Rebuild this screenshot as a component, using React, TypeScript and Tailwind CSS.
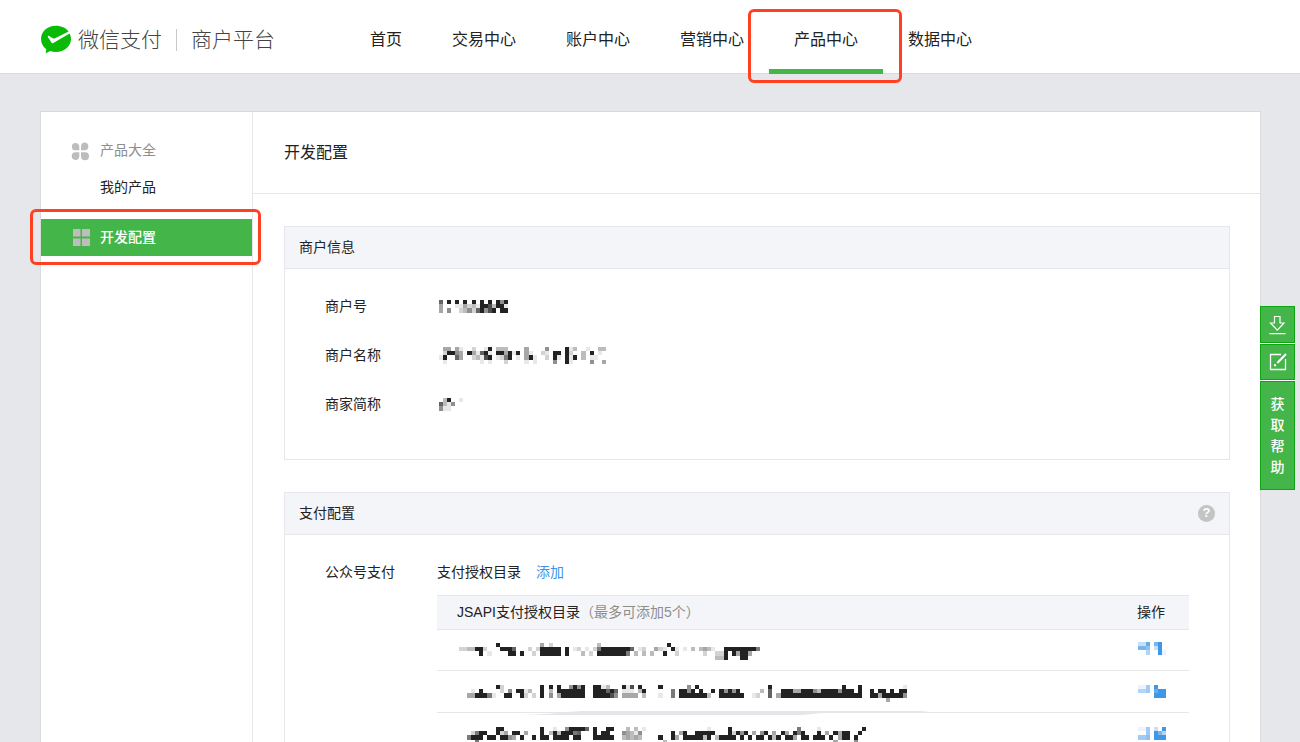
import React from 'react';

const CELL = 4.07;

/* Each row is a list of runs, "startColumn:levels", where a level is 0 (clear) to 9 (solid). */
function Mosaic({ rows, cols, color = '#222222', label }: { rows: string[]; cols: number; color?: string; label: string }) {
  const w = Math.round(cols * CELL);
  const h = Math.round(rows.length * 4.2);
  return (
    <svg width={w} height={h} viewBox={`0 0 ${w} ${h}`} role="img" aria-label={label} shapeRendering="crispEdges" className="block">
      {rows.map((row, y) =>
        row.split(' ').filter(Boolean).flatMap((run) => {
          const [start, levels] = run.split(':');
          return levels.split('').map((n, i) => {
            if (n === '0') return null;
            const left = Math.round((Number(start) + i) * CELL);
            const right = Math.round((Number(start) + i + 1) * CELL);
            const top = Math.round(y * 4.2);
            const bottom = Math.round((y + 1) * 4.2);
            return (
              <rect
                key={`${y}-${start}-${i}`}
                x={left}
                y={top}
                width={right - left}
                height={bottom - top}
                fill={color}
                fillOpacity={n === '9' ? 1 : Number(n) / 10}
              />
            );
          });
        }),
      )}
    </svg>
  );
}

const merchantInfo = [
  {
    label: '商户号',
    cols: 17,
    rows: ['0:70909090909090959', '0:40001142319983991', '0:40500235279589099'],
  },
  {
    label: '商户名称',
    cols: 41,
    rows: [
      '1:44041 8:2 11:19 14:333 21:4 26:5 31:913 36:1 39:33',
      '1:299540941791 14:994919 21:41 25:21 28:99 31:92 35:309 39:1',
      '0:19007400231890126901 21:491 26:2 28:91 31:919 35:3011',
      '1:1 10:101 16:2 21:101 28:5 31:91 37:5 40:4',
    ],
  },
  { label: '商家简称', cols: 6, rows: ['1:39 5:1', '0:7315', '0:511'] },
];

const directories = [
  {
    top: 'pt-[13px]',
    opTop: 'pt-[12px]',
    height: 'h-[41px]',
    cols: 74,
    rows: [
      '9:9 20:402 34:3 51:9',
      '0:2233992 10:9997 17:202 20:99999 26:9 28:12 31:1 33:2699999997 44:12 48:421 52:91 55:103 59:3431 65:999999996',
      '5:901 12:9909 18:2 20:99999 26:9 30:302 34:9999999603 45:303 50:9 53:2 60:2 63:2290949940',
      '63:3390009 9:0 70:9',
    ],
    op: ['0:338079', '0:776039', '2:400910'],
  },
  {
    top: 'pt-[14px]',
    opTop: 'pt-[14px]',
    height: 'h-[42px]',
    cols: 111,
    rows: [
      '9:92 20:909 24:9 27:5959 33:9913 40:91809 49:9 56:509 76:9 94:9 98:9 109:1',
      '3:109 10:205 14:9913 20:903 24:9999999 33:999797 40:111039 52:609959090 62:9 64:95959 74:307 79:99944999539999599909 101:909909099',
      '2:449996 8:1 11:99 15:92 18:202 20:9 22:5 24:4999999 33:999985 40:44440 45:3 49:1 52:6099999993 64:999999 72:12007 78:499999999999999999999 101:994999995',
      '105:4',
    ],
    op: ['0:11509', '0:4450899', '4:999'],
  },
  {
    top: 'pt-[14px]',
    opTop: 'pt-[14px]',
    height: 'h-[42px]',
    cols: 101,
    rows: [
      '9:99 20:9001 26:599997 33:9009 37:9 41:303 45:1 61:1 66:9 83:6 88:1 99:9',
      '3:2699 9:92409904 20:9039 24:399967 33:9099 40:54315 52:9049009 59:9999 66:92959 72:4059 77:40940969 88:904 92:9499 98:9',
      '2:699909 8:90995409 17:09 20:9909 24:9990990 33:99999 40:34343 49:90 52:9409999939 63:3999909 71:90990939099409909 88:99 91:9049909',
      '4:6 50:3 92:4 97:5',
    ],
    op: ['0:1150309', '2:50974', '0:5560999'],
  },
];

const navItems = ['首页', '交易中心', '账户中心', '营销中心', '产品中心', '数据中心'];

function Highlight({ className }: { className: string }) {
  return <span aria-hidden="true" className={`pointer-events-none absolute z-10 rounded-md border-3 border-[#ff4122] ${className}`} />;
}

function Header() {
  return (
    <header className="flex h-[74px] shrink-0 items-stretch border-b border-[#d9dadc] bg-white">
      <a href="#home" className="ml-10 flex w-[305px] items-center pt-[7px] text-[21px] font-light text-[#444]">
        <svg width="32" height="30" viewBox="0 0 32 30" aria-hidden="true">
          <path
            d="M16 .8C7.500.8 1 6.600 1 14c0 4.200 2.100 7.900 5.300 10.300L5.700 28.500l4.400-2.500c1.900.7 3.800 1 5.900 1 8.400 0 15-5.800 15-13 0-2-.5-4-1.400-5.600L13.300 18.100c-.8.400-1.500.2-1.900-.6L7.900 11.900c-.3-.8.400-1.300 1.100-.9l3.800 2.300c.6.400 1.100.4 1.800.1L28.600 6.500C25.900 3 21.300.8 16 .8z"
            fill="#09bb07"
          />
        </svg>
        <span className="ml-[6px]">微信支付</span>
        <span className="mx-[14px] h-[22px] w-px bg-[#c8c8c8]" />
        <span>商户平台</span>
      </a>
      <nav className="flex text-base text-[#222]">
        {navItems.map((item) => (
          <a key={item} href="#nav" className="relative flex items-center px-[25px] pt-[7px]">
            <span className="whitespace-nowrap">{item}</span>
            {item === '产品中心' && (
              <>
                <span className="absolute inset-x-0 -bottom-px h-[5px] bg-[#44b549]" />
                <Highlight className="top-[9px] -right-[19px] -bottom-[10px] -left-[21px]" />
              </>
            )}
          </a>
        ))}
      </nav>
    </header>
  );
}

function Sidebar() {
  return (
    <aside className="w-[212px] shrink-0 border-r border-[#e7e7eb] pt-[21px]">
      <div className="flex h-9 items-center pl-[30px] text-[#8d8d8d]">
        <svg width="19" height="19" viewBox="0 0 19 19" aria-hidden="true" fill="#bdbdbd" className="mr-[10px]">
          <path d="M4.500 1A3.600 3.600 0 0 1 8.300 4.700V8.300H4.500A3.650 3.650 0 0 1 4.500 1z" />
          <path d="M14.200.5a4 4 0 0 1 0 7.800H10V4.500A4.100 4.100 0 0 1 14.200.5z" />
          <path d="M4.500 10.300H8.300V14.500A3.800 3.800 0 1 1 4.500 10.300z" />
          <path d="M10 10.300h4.100A4 4 0 1 1 10 14.500z" />
        </svg>
        <span className="pb-0.5">产品大全</span>
      </div>
      <a href="#mine" className="flex h-9 items-center pl-[59px] text-[#222]">我的产品</a>
      <div className="relative mt-[14px]">
        <a href="#dev" className="flex h-[37px] items-center bg-[#44b549] pl-[32px] font-medium text-white">
          <svg width="17" height="17" viewBox="0 0 17 17" aria-hidden="true" fill="#bdbdbd" className="mr-[10px]">
            <path d="M0 0h7.500v7.500H0zM9 0h8v7.500H9zM0 9.500h7.500V17H0zM9 9.500h8V17H9z" />
          </svg>
          <span className="pb-0.5">开发配置</span>
        </a>
        <Highlight className="-top-[10px] -right-[9px] -bottom-[9px] -left-[11px]" />
      </div>
    </aside>
  );
}

function Panel({ title, help, children }: { title: string; help?: boolean; children: React.ReactNode }) {
  return (
    <section className="border border-[#e7e7eb]">
      <div className="flex h-[42px] items-center justify-between border-b border-[#e7e7eb] bg-[#f4f5f9] px-[14px]">
        <h2 className="pb-0.5">{title}</h2>
        {help && (
          <button type="button" aria-label="帮助" className="flex size-[17px] items-center justify-center rounded-full bg-[#c4c4c4] text-[13px] font-bold text-white">
            ?
          </button>
        )}
      </div>
      {children}
    </section>
  );
}

function FloatingTools() {
  const box = 'flex w-[35px] items-center justify-center border border-[#0ea512] bg-[#44b549] text-white';
  return (
    <div className="fixed top-[306px] right-[5px] z-20 flex flex-col gap-px bg-white">
      <button type="button" aria-label="下载" className={`${box} h-[37px]`}>
        <svg width="17" height="20" viewBox="0 0 17 20" fill="none" stroke="#fff" strokeWidth="1.2" aria-hidden="true">
          <path d="M5.500 1.500h5.500v6.500h4L8.300 15.200 1.500 8h4zM.5 18.700h16" />
        </svg>
      </button>
      <button type="button" aria-label="反馈" className={`${box} h-[36px]`}>
        <svg width="18" height="18" viewBox="0 0 18 18" fill="none" stroke="#fff" strokeWidth="1.300" aria-hidden="true">
          <path d="M12 1.500H1.500v15h15V6" />
          <path d="M17 1 8.300 10" strokeWidth="2" />
          <path d="M6.500 11.300 5.500 13.300" strokeWidth="2" />
        </svg>
      </button>
      <button type="button" className={`${box} h-[109px] px-[9px] text-center text-sm leading-[21px] font-medium`}>
        获取帮助
      </button>
    </div>
  );
}

export default function App() {
  return (
    <div className="flex h-screen flex-col overflow-hidden bg-[#e6e7eb] font-['Liberation_Sans','Noto_Sans_CJK_SC',sans-serif] text-sm text-[#222]">
      <Header />
      <div className="mt-[37px] mr-[39px] ml-10 flex flex-1 border border-[#d9dadc] bg-white">
        <Sidebar />
        <main className="min-w-0 flex-1">
          <h1 className="flex h-[82px] items-center border-b border-[#e7e7eb] px-[31px] text-base">开发配置</h1>
          <div className="flex flex-col gap-8 py-8 pr-[30px] pl-[31px]">
            <Panel title="商户信息">
              <dl className="px-10 pt-[13px] pb-[30px]">
                {merchantInfo.map((item) => (
                  <div key={item.label} className="flex h-[49px] items-center">
                    <dt className="w-[114px] pb-0.5">{item.label}</dt>
                    <dd>
                      <Mosaic rows={item.rows} cols={item.cols} label={item.label} />
                    </dd>
                  </div>
                ))}
              </dl>
            </Panel>
            <Panel title="支付配置" help>
              <div className="flex px-10 pt-[26px]">
                <div className="w-[112px] shrink-0 leading-[22px]">公众号支付</div>
                <div className="min-w-0 flex-1">
                  <div className="flex gap-[15px] leading-[22px]">
                    <span>支付授权目录</span>
                    <a href="#add" className="text-[#3b94e8]">添加</a>
                  </div>
                  <div className="relative mt-[12px]">
                    <table className="w-full border-separate border-spacing-0 text-left">
                      <thead>
                        <tr className="bg-[#f4f5f9]">
                          <th className="h-[35px] border-y border-[#e7e7eb] pb-0.5 pl-5 font-normal">
                            JSAPI支付授权目录<span className="text-[#8d8d8d]">（最多可添加5个）</span>
                          </th>
                          <th className="w-[52px] border-y border-[#e7e7eb] pb-0.5 font-normal">操作</th>
                        </tr>
                      </thead>
                      <tbody>
                        {directories.map((d, i) => (
                          <tr key={i} className="align-top">
                            <td className={`${d.height} ${d.top} border-b border-[#e7e7eb] pl-[22px]`}>
                              <Mosaic rows={d.rows} cols={d.cols} label="支付授权目录" />
                            </td>
                            <td className={`${d.opTop} border-b border-[#e7e7eb] pl-px`}>
                              <a href="#edit" className="block">
                                <Mosaic rows={d.op} cols={7} color="#3f97e9" label="操作" />
                              </a>
                            </td>
                          </tr>
                        ))}
                      </tbody>
                    </table>
                    <svg width="410" height="5" viewBox="0 0 410 5" aria-hidden="true" className="absolute top-[116px] left-[85px]">
                      <path d="M0 4C20 4 40 1 60 0H408L390 2H300L280 4H50z" fill="#e5e5ea" />
                    </svg>
                  </div>
                </div>
              </div>
            </Panel>
          </div>
        </main>
      </div>
      <FloatingTools />
    </div>
  );
}
